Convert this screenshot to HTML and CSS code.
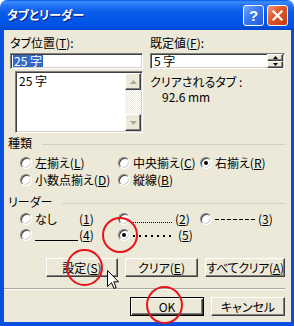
FILE: index.html
```html
<!DOCTYPE html>
<html lang="ja">

<head>
    <meta charset="UTF-8">
    <meta name="viewport" content="width=device-width, initial-scale=1.0">
    <title>タブとリーダー</title>
    <link rel="stylesheet" href="styles.css">
</head>

<body>
    <div class="window">
        <div class="titlebar">
            <span class="title">タブとリーダー</span>
            <span class="cap-btn help">?</span>
            <span class="cap-btn close">
                <svg width="13" height="13" viewBox="0 0 13 13"><path d="M2.5 2.5 L10.5 10.5 M10.5 2.5 L2.5 10.5" stroke="#fff" stroke-width="2.2" stroke-linecap="square"/></svg>
            </span>
        </div>
        <div class="client">
            <div class="top">
                <div class="col col-left">
                    <div class="label">タブ位置(<u>T</u>):</div>
                    <div class="field"><span class="selected">25 字</span></div>
                    <div class="listbox">
                        <div class="items">
                            <div class="item">25 字</div>
                        </div>
                        <div class="vscroll">
                            <div class="sbtn"><svg width="7" height="4" viewBox="0 0 7 4"><path d="M3.5 0 L7 4 H0 Z" fill="#aca899"/></svg></div>
                            <div class="track"></div>
                            <div class="sbtn"><svg width="7" height="4" viewBox="0 0 7 4"><path d="M0 0 H7 L3.5 4 Z" fill="#aca899"/></svg></div>
                        </div>
                    </div>
                </div>
                <div class="col col-right">
                    <div class="label">既定値(<u>F</u>):</div>
                    <div class="field spin">
                        <span class="value">5 字</span>
                        <div class="spin-btns">
                            <div class="spin-btn"><svg width="5" height="3" viewBox="0 0 5 3"><path d="M2.5 0 L5 3 H0 Z" fill="#000"/></svg></div>
                            <div class="spin-btn"><svg width="5" height="3" viewBox="0 0 5 3"><path d="M0 0 H5 L2.5 3 Z" fill="#000"/></svg></div>
                        </div>
                    </div>
                    <div class="info first">クリアされるタブ :</div>
                    <div class="info indent">92.6 mm</div>
                </div>
            </div>

            <div class="group-head"><span>種類</span>
                <div class="rule"></div>
            </div>
            <div class="options">
                <div class="opt"><span class="radio"></span><span>左揃え(<u>L</u>)</span></div>
                <div class="opt"><span class="radio"></span><span>中央揃え(<u>C</u>)</span></div>
                <div class="opt"><span class="radio on"></span><span>右揃え(<u>R</u>)</span></div>
                <div class="opt"><span class="radio"></span><span>小数点揃え(<u>D</u>)</span></div>
                <div class="opt"><span class="radio"></span><span>縦線(<u>B</u>)</span></div>
            </div>

            <div class="group-head leader-head"><span>リーダー</span>
                <div class="rule"></div>
            </div>
            <div class="options leaders">
                <div class="opt"><span class="radio"></span><span class="sample w44">なし</span><span>(<u>1</u>)</span></div>
                <div class="opt"><span class="radio"></span><span class="sample w42"><i class="dotted"></i></span><span>(<u>2</u>)</span></div>
                <div class="opt"><span class="radio"></span><span class="sample w43"><i class="dashed"></i></span><span>(<u>3</u>)</span></div>
                <div class="opt"><span class="radio"></span><span class="sample w44"><i class="solid"></i></span><span>(<u>4</u>)</span></div>
                <div class="opt"><span class="radio on"></span><span class="sample w45"><i class="bigdots"></i></span><span>(<u>5</u>)</span></div>
            </div>

            <div class="btn-row tabs-btns">
                <button class="btn w72">設定(<u>S</u>)</button>
                <button class="btn w73">クリア(<u>E</u>)</button>
                <button class="btn w80 tight">すべてクリア(<u>A</u>)</button>
            </div>
            <div class="separator"></div>
            <div class="btn-row">
                <button class="btn w74 default">OK</button>
                <button class="btn w74">キャンセル</button>
            </div>
        </div>

        <div class="mark m1"></div>
        <div class="mark m2"></div>
        <div class="mark m3"></div>
        <svg class="cursor" width="13" height="20" viewBox="0 0 13 20"><path d="M0.5 0.5 V16.5 L4.5 12.7 L7 18.5 L9.2 17.6 L6.8 11.8 H11.5 Z" fill="#fff" stroke="#000" stroke-width="1" stroke-linejoin="miter"/></svg>
    </div>
</body>

</html>
```

FILE: styles.css
```css
* {
    box-sizing: border-box;
}

body {
    margin: 0;
    background: #fff;
    font-family: "Noto Sans CJK JP", "Noto Sans", sans-serif;
    font-size: 12px;
    font-feature-settings: "palt";
    color: #000;
}

u {
    text-decoration-thickness: 1px;
    text-underline-offset: 1px;
}

.window {
    position: relative;
    width: 294px;
    height: 326px;
    display: flex;
    flex-direction: column;
    overflow: hidden;
}

.titlebar {
    flex: none;
    height: 30px;
    display: flex;
    align-items: center;
    gap: 3px;
    padding: 0 6px 0 7px;
    border-radius: 7px 7px 0 0;
    background: linear-gradient(180deg, #0a5ae8 0, #3d8dfc 2px, #2574f5 5px, #0b5de9 12px, #0257e8 20px, #0052e0 26px, #0046d2 30px);
}

.title {
    flex: 1;
    color: #fff;
    font-weight: bold;
    line-height: 14px;
    text-shadow: 1px 1px #0a1883;
}

.cap-btn {
    width: 21px;
    height: 21px;
    border: 1px solid #fff;
    border-radius: 3px;
    display: flex;
    align-items: center;
    justify-content: center;
}

.help {
    background: linear-gradient(135deg, #7aa8f8 0, #3f7cf0 40%, #1f58dc 100%);
    color: #fff;
    font: bold 15px "Liberation Sans", sans-serif;
    line-height: 19px;
}

.close {
    background: linear-gradient(135deg, #f09b7c 0, #e05a2c 40%, #c53b10 100%);
}

.client {
    flex: 1;
    background: #ece9d8;
    border: solid #0b4fe0;
    border-width: 0 3px 4px 4px;
    padding: 6px 6px 0;
}

.top {
    display: flex;
    gap: 7px;
}

.col-left {
    width: 133px;
}

.col-right {
    width: 135px;
}

.label,
.info {
    height: 14px;
    line-height: 14px;
    white-space: nowrap;
}

.info {
    height: 15px;
    line-height: 15px;
}

.field {
    margin-top: 3px;
    height: 16px;
    display: flex;
    align-items: center;
    padding: 0 1px 0 2px;
    background: #fff;
    border: 1px solid;
    border-color: #808080 #fff #fff #808080;
    box-shadow: inset 1px 1px #404040, inset -1px -1px #d4d0c8;
    line-height: 12px;
}

.selected {
    background: #316ac5;
    color: #fff;
    padding: 0 1px;
}

.value {
    flex: 1;
    padding-left: 1px;
}

.spin-btns {
    width: 16px;
    height: 14px;
    display: flex;
    flex-direction: column;
}

.spin-btn,
.sbtn {
    flex: 1;
    display: flex;
    align-items: center;
    justify-content: center;
    background: #ece9d8;
    border: 1px solid;
    border-color: #fff #404040 #404040 #fff;
    box-shadow: inset -1px -1px #808080;
}

.listbox {
    margin: 2px 0 0 5px;
    height: 62px;
    display: flex;
    padding: 2px;
    background: #fff;
    border: 1px solid;
    border-color: #808080 #fff #fff #808080;
    box-shadow: inset 1px 1px #404040, inset -1px -1px #d4d0c8;
}

.items {
    flex: 1;
    line-height: 13px;
    padding-left: 1px;
}

.vscroll {
    width: 16px;
    display: flex;
    flex-direction: column;
    margin: -1px -1px -1px 0;
}

.sbtn {
    flex: none;
    height: 17px;
}

.track {
    flex: 1;
    background: repeating-conic-gradient(#fff 0 25%, #ece9d8 0 50%) 0 0 / 2px 2px;
}

.info.first {
    margin-top: 5px;
}

.info.indent {
    padding-left: 12px;
}

.group-head {
    margin: 3px 0 0 -2px;
    display: flex;
    align-items: center;
    gap: 10px;
    height: 14px;
    line-height: 14px;
}

.leader-head {
    margin-top: 7px;
}

.rule {
    flex: 1;
    margin-top: 2px;
    border-top: 1px solid #d0d0bf;
}

.options {
    margin-top: 4px;
    padding-left: 10px;
    display: grid;
    grid-template-columns: 98px 82px 1fr;
    grid-auto-rows: 17px;
}

.leaders {
    margin-top: 2px;
    grid-auto-rows: 16px;
}

.opt {
    display: flex;
    align-items: center;
    gap: 3px;
    line-height: 14px;
    white-space: nowrap;
}

.radio {
    flex: none;
    position: relative;
    width: 12px;
    height: 12px;
    border-radius: 50%;
    background: #fff;
    border: 1px solid;
    border-color: #808080 #fff #fff #808080;
    box-shadow: inset 1px 1px #404040, inset -1px -1px #d4d0c8;
}

.radio.on::after {
    content: "";
    position: absolute;
    left: 3px;
    top: 3px;
    width: 4px;
    height: 4px;
    border-radius: 50%;
    background: #000;
}

.sample {
    display: flex;
    align-items: center;
    height: 14px;
    margin-right: -3px;
}

.sample i {
    display: block;
    width: 40px;
}

.w42 { width: 42px; }
.w43 { width: 43px; }
.w44 { width: 44px; }
.w45 { width: 45px; }

.dotted {
    height: 1px;
    margin-top: 7px;
    background: repeating-linear-gradient(90deg, #000 0 1px, transparent 1px 2px);
}

.dashed {
    height: 1px;
    width: 42px !important;
    background: repeating-linear-gradient(90deg, #000 0 4px, transparent 4px 6px);
}

.solid {
    height: 1px;
    width: 43px !important;
    margin-top: 10px;
    background: #000;
}

.bigdots {
    height: 2px;
    margin-top: 1px;
    background: repeating-linear-gradient(90deg, #000 0 2px, transparent 2px 6px);
}

.btn-row {
    display: flex;
    justify-content: flex-end;
    gap: 7px;
}

.tabs-btns {
    margin-top: 15px;
}

.btn {
    height: 19px;
    padding: 0;
    font: inherit;
    line-height: 15px;
    white-space: nowrap;
    color: #000;
    background: #ece9d8;
    border: 1px solid;
    border-color: #fff #404040 #404040 #fff;
    box-shadow: inset -1px -1px #808080;
}

.btn.tight {
    letter-spacing: -0.3px;
}

.btn.default {
    border-color: #000;
    box-shadow: inset 1px 1px #fff, inset -1px -1px #404040, inset -2px -2px #808080;
}

.w72 { width: 72px; }
.w73 { width: 73px; }
.w74 { width: 74px; }
.w80 { width: 80px; }

.separator {
    margin: 11px 0 7px -6px;
    height: 2px;
    border-top: 1px solid #aca899;
    border-bottom: 1px solid #fff;
}

.mark {
    position: absolute;
    border: 2px solid #e8141c;
    border-radius: 50%;
}

.m1 {
    left: 66px;
    top: 249px;
    width: 37px;
    height: 37px;
}

.m2 {
    left: 102px;
    top: 217px;
    width: 36px;
    height: 36px;
}

.m3 {
    left: 146px;
    top: 286px;
    width: 37px;
    height: 38px;
}

.cursor {
    position: absolute;
    left: 107px;
    top: 270px;
}
```
